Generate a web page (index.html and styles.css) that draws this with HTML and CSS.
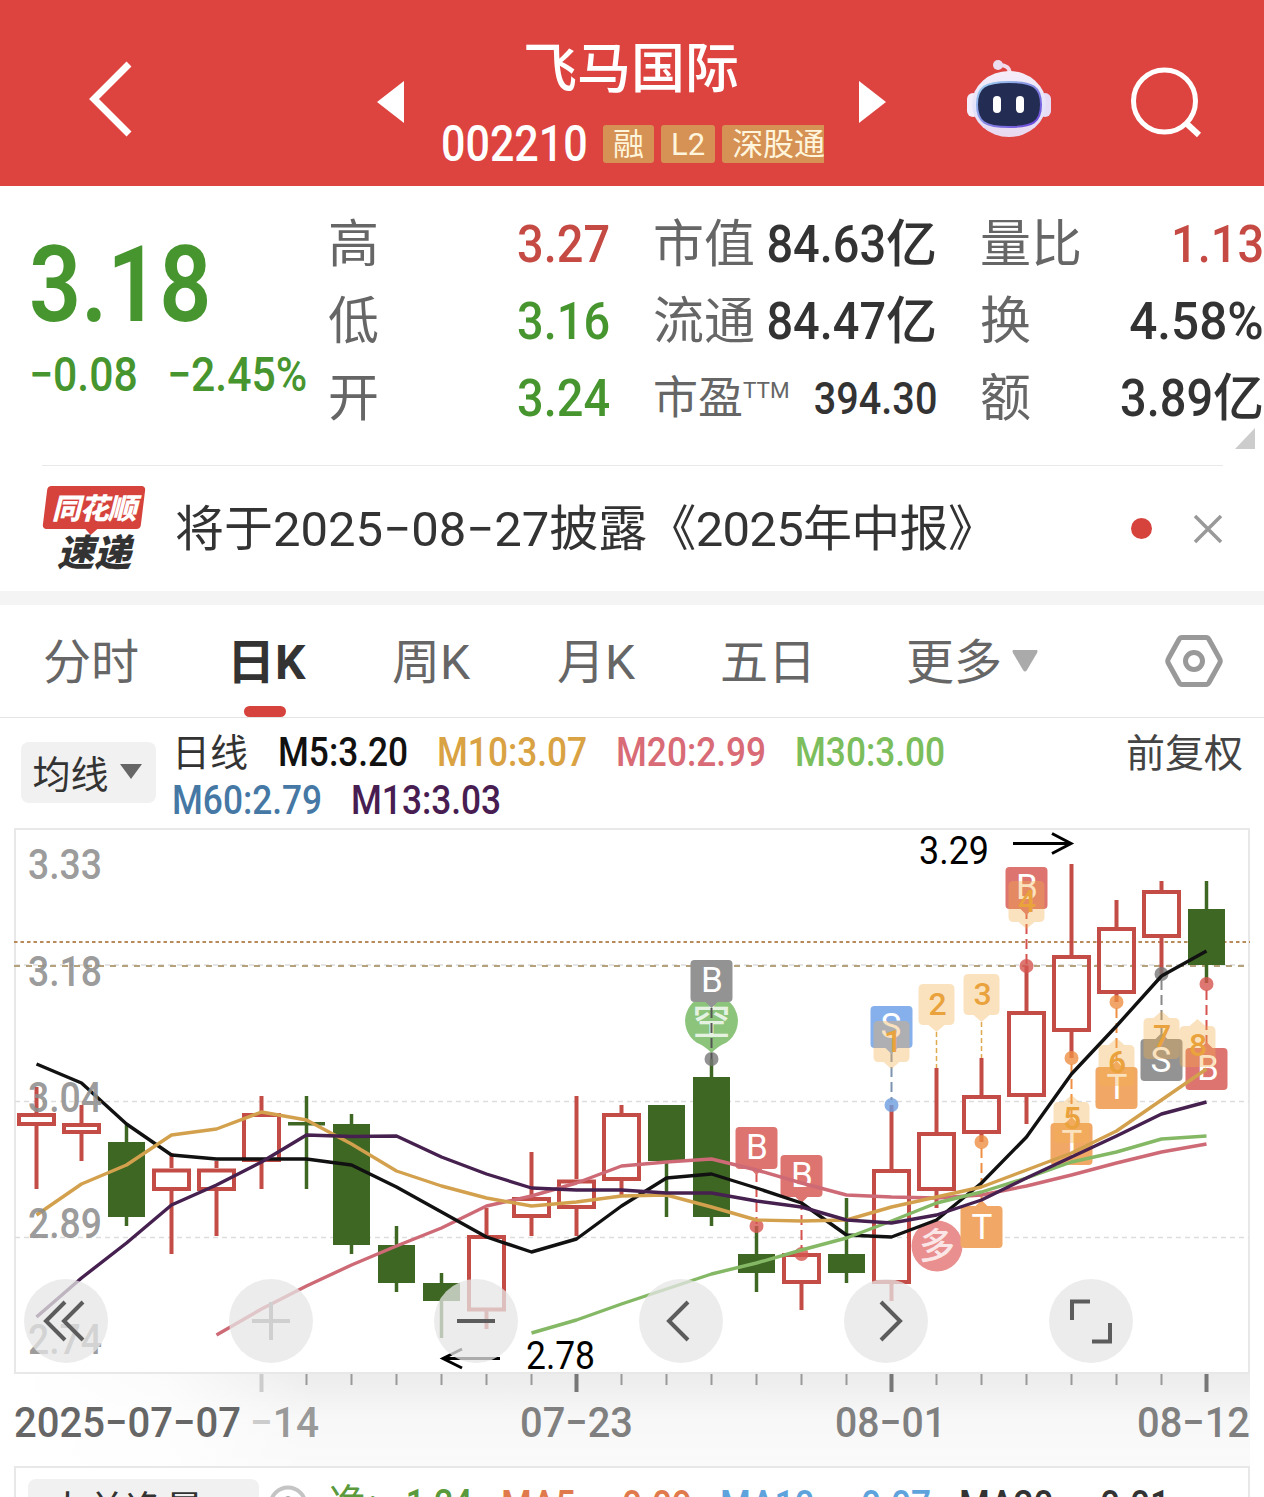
FILE: index.html
```html
<!DOCTYPE html>
<html lang="zh-CN">
<head>
  <meta charset="UTF-8">
  <meta name="viewport" content="width=device-width, initial-scale=1.0">
  <title>飞马国际 002210</title>
  <link rel="stylesheet" href="styles.css">
</head>
<body>
  <!-- 顶部栏 -->
  <header class="header">
    <svg class="back" width="46" height="78" viewBox="0 0 46 78"><path d="M42 4 7 39 42 74" fill="none" stroke="#fff" stroke-width="7"/></svg>
    <svg class="prev" width="27" height="42" viewBox="0 0 27 42"><path d="M27 0v42L0 21z" fill="#fff"/></svg>
    <div class="title">
      <h1>飞马国际</h1>
      <div class="code-row">
        <span class="code"><span class="num">002210</span></span>
        <span class="tag">融</span>
        <span class="tag">L2</span>
        <span class="tag last">深股通</span>
      </div>
    </div>
    <svg class="next" width="27" height="42" viewBox="0 0 27 42"><path d="M0 0v42l27-21z" fill="#fff"/></svg>
    <svg class="robot" width="86" height="80" viewBox="0 0 86 80">
      <defs>
        <linearGradient id="head" x1="0" y1="0" x2="0" y2="1"><stop offset="0" stop-color="#f6edf8"/><stop offset=".6" stop-color="#e3e2fa"/><stop offset="1" stop-color="#ead8ee"/></linearGradient>
        <linearGradient id="ring" x1="0" y1="0" x2="1" y2="1"><stop offset="0" stop-color="#9fd5ef"/><stop offset="1" stop-color="#6a3fd8"/></linearGradient>
      </defs>
      <path d="M32 7q12-1 12 10" fill="none" stroke="#f3dcea" stroke-width="4"/>
      <circle cx="32" cy="7" r="5" fill="#ecdcf0"/>
      <rect x="1" y="35" width="12" height="24" rx="6" fill="#f4ecf8"/>
      <rect x="73" y="35" width="12" height="24" rx="6" fill="#e6dcf6"/>
      <ellipse cx="43" cy="46" rx="37" ry="33" fill="url(#head)"/>
      <path d="M43 24c24 0 32 5 32 22.500S67 69 43 69 11 64 11 46.500 19 24 43 24z" fill="#232c52" stroke="url(#ring)" stroke-width="2"/>
      <rect x="27" y="38" width="8" height="17" rx="4" fill="#fff"/>
      <rect x="50" y="38" width="8" height="17" rx="4" fill="#fff"/>
    </svg>
    <svg class="search" width="72" height="72" viewBox="0 0 72 72"><g fill="none" stroke="#fff" stroke-width="5"><circle cx="34.500" cy="34" r="31"/><path d="M56 56 69 68" stroke-width="6"/></g></svg>
  </header>

  <!-- 行情 -->
  <section class="quote">
    <div class="price">
      <div class="last-price"><span class="num">3.18</span></div>
      <div class="change"><span class="num">−0.08</span><span class="num">−2.45%</span></div>
    </div>
    <dl class="stats col-a">
      <dt>高</dt><dd class="red"><span class="num">3.27</span></dd>
      <dt>低</dt><dd class="green"><span class="num">3.16</span></dd>
      <dt>开</dt><dd class="green"><span class="num">3.24</span></dd>
    </dl>
    <dl class="stats col-b">
      <dt>市值</dt><dd><span class="num">84.63</span>亿</dd>
      <dt>流通</dt><dd><span class="num">84.47</span>亿</dd>
      <dt class="small">市盈<sup>TTM</sup></dt><dd class="small"><span class="num">394.30</span></dd>
    </dl>
    <dl class="stats col-c">
      <dt>量比</dt><dd class="red"><span class="num">1.13</span></dd>
      <dt>换</dt><dd><span class="num wide">4.58%</span></dd>
      <dt>额</dt><dd><span class="num">3.89</span>亿</dd>
    </dl>
    <i class="corner"></i>
  </section>

  <!-- 速递 -->
  <section class="news">
    <div class="logo">
      <div class="logo-top"><span>同花顺</span></div>
      <div class="logo-bottom">速递</div>
    </div>
    <p>将于2025−08−27披露<span class="book">《2025年中报》</span></p>
    <i class="dot"></i>
    <svg width="30" height="30" viewBox="0 0 30 30"><path d="M2 2 28 28M28 2 2 28" stroke="#999" stroke-width="3.500"/></svg>
  </section>

  <!-- 周期 -->
  <nav class="tabs">
    <span>分时</span>
    <span class="active">日K</span>
    <span>周K</span>
    <span>月K</span>
    <span>五日</span>
    <span>更多<svg width="26" height="22" viewBox="0 0 26 22"><path d="M1 0h24q1 1 0 3L15 20q-2 3-4 0L1 3q-1-2 0-3z" fill="#aaa"/></svg></span>
    <svg class="setting" width="58" height="54" viewBox="0 0 58 54"><g fill="none" stroke="#999" stroke-width="5"><path d="M17 3.500h24q2 0 3 2l10.500 19q1.500 2.500 0 5L44 48.500q-1 2-3 2H17q-2 0-3-2L3.500 29.500q-1.500-2.500 0-5L14 5.500q1-2 3-2z"/><circle cx="29" cy="27" r="8.500"/></g></svg>
  </nav>

  <!-- 均线 -->
  <section class="legend">
    <button>均线<svg width="22" height="15" viewBox="0 0 22 15"><path d="M0 0h22L11 15z" fill="#666"/></svg></button>
    <div class="ma">
      <div class="ma-row">
        <b class="day">日线</b>
        <span class="num m5">M5:3.20</span>
        <span class="num m10">M10:3.07</span>
        <span class="num m20">M20:2.99</span>
        <span class="num m30">M30:3.00</span>
      </div>
      <div class="ma-row">
        <span class="num m60">M60:2.79</span>
        <span class="num m13">M13:3.03</span>
      </div>
    </div>
    <span class="adjust">前复权</span>
  </section>

  <!-- K线图 -->
  <section class="chart">
    <svg width="1264" height="638" viewBox="0 828 1264 638">
      <defs>
        <linearGradient id="axis-y" x1="0" y1="0" x2="0" y2="1"><stop offset="0" stop-color="#ececec"/><stop offset=".5" stop-color="#f8f8f8"/><stop offset="1" stop-color="#fafafa"/></linearGradient>
        <linearGradient id="axis-x"><stop offset="0" stop-color="#fff"/><stop offset=".5" stop-color="#fff" stop-opacity=".8"/><stop offset="1" stop-color="#fff" stop-opacity="0"/></linearGradient>
        <path id="box-down" d="M-17-21h34q4 0 4 4v34q0 4-4 4H6l-6 6-6-6h-11q-4 0-4-4v-34q0-4 4-4z"/>
        <path id="box-up" d="M-17-21h11l6-6 6 6h11q4 0 4 4v34q0 4-4 4h-34q-4 0-4-4v-34q0-4 4-4z"/>
        <path id="bubble" d="M-13-21h26q5 0 5 5v31q0 5-5 5H8l-8 7-8-7h-5q-5 0-5-5v-31q0-5 5-5z"/>
        <path id="bubble-up" d="M-13-20h5l8-7 8 7h5q5 0 5 5v31q0 5-5 5h-26q-5 0-5-5v-31q0-5 5-5z"/>
      </defs>

      <rect x="14" y="1374" width="1236" height="94" fill="url(#axis-y)"/>
      <rect x="14" y="1374" width="300" height="94" fill="url(#axis-x)"/>
      <path d="M15 1373V829H1249V1373z" fill="#fff" stroke="#e8e8e8" stroke-width="2"/>
      <g stroke="#ddd" stroke-width="1.500" stroke-dasharray="5 4">
        <path d="M15 965H1249M15 1101.500H1249M15 1237.500H1249"/>
      </g>
      <path d="M14 942H1250" stroke="#b98a5a" stroke-width="2" stroke-dasharray="3.500 3"/>
      <path d="M14 966H1250" stroke="#b5a27c" stroke-width="2" stroke-dasharray="6 6"/>

      <!-- 阳线 -->
      <g class="up">
        <path d="M36.500 1087v27m0 11v64M81.500 1105v18m0 11v27M171.500 1153v15m0 23v63M216.500 1161v7m0 23v45M261.500 1096v17m0 48v28M486.500 1208v27m0 76v18M531.500 1152v44m0 22v18M576.500 1096v83m0 30v27M621.500 1105v8m0 68v14M801.500 1284v26M891.500 1105v64m0 115v17M936.500 1068v64m0 59v17M981.500 1058v37m0 39v8M1026.500 966v45m0 86v27M1071.500 864v91m0 77v26M1116.500 900v27m0 67v8M1161.500 881v9m0 48v36"/>
        <path d="M19 1115h35v9H19zM64 1125h35v7H64zM154 1170.500h35v18.500h-35zM199 1170.500h35v18.500h-35zM244 1115h35v45h-35zM469 1237h35v72.500h-35zM514 1199h35v17h-35zM559 1181.500h35v25.500h-35zM604 1115h35v64h-35zM784 1255h35v27h-35zM874 1171h35v111h-35zM919 1134h35v55h-35zM964 1097h35v35h-35zM1009 1013h35v82h-35zM1054 957h35v73h-35zM1099 929h35v63h-35zM1144 892h35v44h-35z"/>
      </g>
      <!-- 阴线 -->
      <g class="down">
        <path class="wick" d="M126.500 1123v103M306.500 1096v93M351.500 1114v140M396.500 1226v66M441.500 1273v65M666.500 1105v112M711.500 1059v167M756.500 1226v66M846.500 1198v85M1206.500 881v102"/>
        <path d="M108 1142h37v75h-37zM288 1122h37v3.500h-37zM333 1124h37v121h-37zM378 1245h37v38h-37zM423 1283h37v18h-37zM648 1105h37v56h-37zM693 1077h37v140h-37zM738 1254h37v19h-37zM828 1254h37v19h-37zM1188 909h37v56h-37z"/>
      </g>

      <!-- 买卖点 -->
      <g fill-opacity=".8">
        <circle cx="711.500" cy="1059" r="7" fill="#777"/>
        <g fill="#d6544f"><circle cx="756.500" cy="1226" r="7"/><circle cx="801.500" cy="1254" r="7"/><circle cx="1026.500" cy="966" r="7"/><circle cx="1206.500" cy="984" r="7"/></g>
        <circle cx="891.500" cy="1105" r="7" fill="#6b9de0"/>
        <g fill="#ee8f43"><circle cx="981.500" cy="1142" r="7"/><circle cx="1071.500" cy="1058" r="7"/><circle cx="1116.500" cy="1002" r="7"/></g>
        <circle cx="1161.500" cy="974" r="7" fill="#777"/>
      </g>
      <g fill="#66b050" fill-opacity=".75"><path d="M711.500 995a26 26 0 0 1 15 47.500q-9 4-15 10.500-6-6.500-15-10.500A26 26 0 0 1 711.500 995z"/></g>
      <text class="badge-cn" x="711.500" y="1034" font-size="38">空</text>
      <circle cx="937" cy="1246" r="25.500" fill="#e98f8f"/>
      <text class="badge-cn" x="937" y="1259" font-size="36">多</text>

      <g stroke-width="2" stroke-dasharray="10 5">
        <path d="M711.500 1008v51" stroke="#555"/>
        <path d="M756.500 1172v52M801.500 1200v52M1026.500 909v55M1206.500 990v56" stroke="#d6544f"/>
        <path d="M891.500 1052v48" stroke="#7d93b0"/>
        <path d="M1161.500 980v54" stroke="#888"/>
        <path d="M981.500 1148v52M1071.500 1064v54M1116.500 1008v52" stroke="#ee8f43"/>
      </g>
      <g stroke="#e0a94f" stroke-width="1.500" stroke-dasharray="5 3"><path d="M936.500 1032v36M981.500 1022v36"/></g>

      <g fill="#939393"><use href="#box-down" x="711.500" y="981"/><use href="#box-up" x="1161.500" y="1060"/></g>
      <g fill="#dd7470"><use href="#box-down" x="756.500" y="1148"/><use href="#box-down" x="801.500" y="1176"/><use href="#box-down" x="1026.500" y="888"/><use href="#box-up" x="1206.500" y="1069"/></g>
      <use href="#box-down" x="891.500" y="1027" fill="#86b0ec"/>
      <g fill="#f1a866"><use href="#box-up" x="981.500" y="1227"/><use href="#box-up" x="1071.500" y="1144"/><use href="#box-up" x="1116.500" y="1088"/></g>
      <g class="badge">
        <text x="712" y="992">B</text><text x="757" y="1159">B</text><text x="802" y="1187">B</text><text x="1027" y="899">B</text>
        <text x="891" y="1038">S</text><text x="982" y="1239">T</text><text x="1072" y="1155">T</text><text x="1117" y="1099">T</text>
        <text x="1161" y="1072">S</text><text x="1208" y="1080">B</text>
      </g>
      <g fill="#f5b04e" fill-opacity=".36">
        <use href="#bubble" x="891.500" y="1042"/><use href="#bubble" x="936.500" y="1005"/><use href="#bubble" x="981.500" y="995"/><use href="#bubble" x="1026.500" y="902"/>
        <use href="#bubble-up" x="1071.500" y="1122"/><use href="#bubble-up" x="1116.500" y="1065"/><use href="#bubble-up" x="1161.500" y="1038"/><use href="#bubble-up" x="1197.500" y="1046"/>
      </g>
      <g class="step">
        <text x="893" y="1052">1</text><text x="937.500" y="1015">2</text><text x="982.500" y="1005">3</text><text x="1027" y="912">4</text>
        <text x="1072" y="1129">5</text><text x="1117" y="1073">6</text><text x="1162" y="1047">7</text><text x="1198" y="1056">8</text>
      </g>

      <!-- 均线 -->
      <g class="lines">
        <polyline stroke="#cd6a76" points="216.500,1335 261.500,1309 306.500,1286 351.500,1265 396.500,1246 441.500,1228 486.500,1206 531.500,1196 576.500,1183 621.500,1166 666.500,1162 711.500,1159 756.500,1170 801.500,1183 846.500,1195 891.500,1197 936.500,1198 981.500,1195 1026.500,1186 1071.500,1175 1116.500,1163 1161.500,1152 1206.500,1144"/>
        <polyline stroke="#111" points="36.500,1064 81.500,1083 126.500,1124 171.500,1155 216.500,1159 306.500,1159 351.500,1165 396.500,1187 441.500,1212 486.500,1237 531.500,1252 576.500,1239 621.500,1206 666.500,1178 711.500,1174 756.500,1188 801.500,1203 846.500,1235 891.500,1237 936.500,1220 981.500,1183 1026.500,1137 1071.500,1074 1116.500,1026 1161.500,976 1206.500,951"/>
        <polyline stroke="#d3a14d" points="36.500,1215 81.500,1184 126.500,1165 171.500,1135 216.500,1129 261.500,1112 306.500,1120 351.500,1144 396.500,1171 441.500,1186 486.500,1198 531.500,1206 576.500,1202 621.500,1196 666.500,1195 711.500,1207 756.500,1220 801.500,1221 846.500,1220 891.500,1207 936.500,1197 981.500,1187 1026.500,1170 1071.500,1153 1116.500,1131 1161.500,1100 1206.500,1069"/>
        <polyline stroke="#84b865" points="531.500,1333 576.500,1320 621.500,1304 666.500,1289 711.500,1274 756.500,1263 801.500,1250 846.500,1238 891.500,1221 936.500,1203 981.500,1192 1026.500,1178 1071.500,1162 1116.500,1152 1161.500,1139 1206.500,1136"/>
        <polyline stroke="#46204f" points="36.500,1317 81.500,1278 126.500,1243 171.500,1205 216.500,1185 261.500,1162 306.500,1135 351.500,1136.500 396.500,1136 441.500,1157 486.500,1174 531.500,1188 576.500,1190 621.500,1190 666.500,1193 711.500,1193 756.500,1201 801.500,1207 846.500,1220 891.500,1223 936.500,1215 981.500,1200 1026.500,1178 1071.500,1157 1116.500,1136 1161.500,1114 1206.500,1102"/>
      </g>

      <g class="scale">
        <text x="28" y="879" textLength="74" lengthAdjust="spacingAndGlyphs">3.33</text>
        <text x="28" y="986" textLength="74" lengthAdjust="spacingAndGlyphs">3.18</text>
        <text x="28" y="1112" textLength="74" lengthAdjust="spacingAndGlyphs">3.04</text>
        <text x="28" y="1238" textLength="74" lengthAdjust="spacingAndGlyphs">2.89</text>
        <text x="28" y="1354" textLength="74" lengthAdjust="spacingAndGlyphs">2.74</text>
      </g>
      <g class="peak">
        <text x="919" y="864" textLength="70" lengthAdjust="spacingAndGlyphs">3.29</text>
        <text x="526" y="1369" textLength="69" lengthAdjust="spacingAndGlyphs">2.78</text>
        <path d="M1013 843.500h57M1052 833.500l19 10-19 10M500 1358.500h-57M462 1349l-19 9.500 19 9.500"/>
      </g>

      <!-- 时间轴 -->
      <path class="tick" d="M306.500 1374v11m45-11v11m45-11v11m45-11v11m45-11v11m45-11v11m90-11v11m45-11v11m45-11v11m45-11v11m45-11v11m45-11v11m90-11v11m45-11v11m45-11v11m45-11v11m45-11v11m45-11v11"/>
      <path class="tick-main" d="M576.500 1374v18M891.500 1374v18M1206.500 1374v18"/>
      <path d="M261.500 1374v18" stroke="#ccc" stroke-width="4"/>
      <g class="dates">
        <text x="14" y="1437" textLength="227" lengthAdjust="spacingAndGlyphs" fill="#666">2025−07−07</text>
        <text x="250" y="1437" textLength="69" lengthAdjust="spacingAndGlyphs"><tspan fill="#ccc">−</tspan><tspan fill="#999">14</tspan></text>
        <text x="520" y="1437" textLength="113" lengthAdjust="spacingAndGlyphs">07−23</text>
        <text x="835" y="1437" textLength="111" lengthAdjust="spacingAndGlyphs">08−01</text>
        <text x="1137" y="1437" textLength="113" lengthAdjust="spacingAndGlyphs">08−12</text>
      </g>
    </svg>

    <!-- 悬浮按钮 -->
    <div class="tools">
      <button><svg viewBox="0 0 84 84"><path d="M41 23 22 42l19 19M59 23 40 42l19 19"/></svg></button>
      <button class="off"><svg viewBox="0 0 84 84"><path d="M23 42h38M42 23v38"/></svg></button>
      <button><svg viewBox="0 0 84 84"><path d="M23 42h38"/></svg></button>
      <button><svg viewBox="0 0 84 84"><path d="M49 23 30 42l19 19"/></svg></button>
      <button><svg viewBox="0 0 84 84"><path d="M37 23 56 42 37 61"/></svg></button>
      <button><svg viewBox="0 0 84 84"><path d="M41 22.500H23V41M61 44v18.500H43"/></svg></button>
    </div>
  </section>

  <!-- 副图 -->
  <section class="sub">
    <button>大单净量</button>
    <svg width="40" height="40" viewBox="0 0 40 40"><circle cx="20" cy="20" r="17.500" fill="none" stroke="#c4c4c4" stroke-width="4"/><circle cx="20" cy="14" r="3" fill="#aaa"/></svg>
    <span class="net">净: <span class="num">−1.24</span></span>
    <span class="num s5">MA5: −0.09</span>
    <span class="num s10">MA10: −0.07</span>
    <span class="num s20">MA20: −0.01</span>
  </section>
</body>
</html>
```
FILE: styles.css
```css
* {
    box-sizing: border-box;
    margin: 0;
    padding: 0;
}
body {
    width: 1264px;
    height: 1497px;
    overflow: hidden;
    background: #fff;
    color: #333;
    font-family: Roboto, "Noto Sans CJK SC", sans-serif;
}
button {
    border: none;
    font-family: inherit;
}
svg {
    display: block;
    flex-shrink: 0;
}
/* 窄体数字 */
.num {
    display: inline-block;
    font-weight: 500;
    transform: scaleX(0.86);
    transform-origin: left;
    white-space: nowrap;
}
.red { color: #c54a43; }
.green { color: #46952f; }

/* 顶部栏 */
.header {
    display: flex;
    height: 186px;
    background: #dd4440;
    color: #fff;
}
.back { margin: 60px 0 0 87px; }
.prev { margin: 81px 0 0 244px; }
.title {
    width: 383px;
    margin: 0 35px 0 37px;
    overflow: hidden;
}
.title h1 {
    margin-top: 39px;
    padding-right: 3px;
    height: 62px;
    line-height: 62px;
    text-align: center;
    font-size: 54px;
    font-weight: 500;
}
.code-row {
    display: flex;
    align-items: center;
    height: 50px;
    margin-top: 18px;
    gap: 7px;
}
.code {
    width: 155px;
    font-size: 50px;
    line-height: 57px;
}
.tag {
    flex-shrink: 0;
    height: 38px;
    padding: 0 10px;
    border-radius: 3px;
    background: #d69255;
    color: #fff5dc;
    font-size: 31px;
    line-height: 39px;
    white-space: nowrap;
}
.next { margin-top: 81px; }
.robot { margin: 58px 0 0 80px; }
.search { margin: 67px 0 0 78px; }

/* 行情 */
.quote {
    position: relative;
    display: flex;
    height: 279px;
    padding-top: 20px;
}
.price {
    width: 328px;
    padding-left: 29px;
    color: #46952f;
}
.last-price {
    height: 130px;
    font-size: 105px;
    line-height: 159px;
}
.last-price .num {
    font-weight: 600;
    transform: scaleX(0.87);
}
.change {
    display: flex;
    gap: 16px;
    margin-top: 12px;
    font-size: 48px;
    line-height: 54px;
}
.change .num { transform: scaleX(0.89); }
.stats {
    display: grid;
    grid-template-columns: auto auto;
    grid-template-rows: repeat(3, 77px);
    justify-content: space-between;
    align-items: center;
    font-size: 51px;
    line-height: 79px;
    white-space: nowrap;
}
.stats dt { color: #666; }
.stats dd {
    text-align: right;
    font-weight: 500;
}
.stats .num {
    transform: scaleX(0.92);
    transform-origin: right;
}
.stats .wide { transform: scaleX(0.97); }
.col-a { width: 282px; }
.col-b {
    width: 284px;
    margin-left: 43px;
    grid-template-columns: 100px 1fr;
}
.col-c {
    width: 284px;
    margin-left: 43px;
}
.stats .small { font-size: 45px; }
.stats .small .num { transform: scaleX(0.88); }
.stats sup {
    font-size: 22.5px;
    line-height: 1;
    vertical-align: 16px;
    font-weight: 400;
}
.corner {
    position: absolute;
    right: 9px;
    bottom: 16px;
    border-left: 20px solid transparent;
    border-bottom: 21px solid #ccc;
}

/* 速递 */
.news {
    display: flex;
    align-items: center;
    height: 126px;
    margin: 0 41px 0 42px;
    border-top: 1px solid #e9e9e9;
}
.logo {
    width: 104px;
    height: 86px;
    font-style: italic;
    font-weight: 900;
}
.logo-top {
    position: relative;
    height: 43px;
    margin: 0 3px;
    border-radius: 4px;
    background: #d5433c;
    color: #fff;
    font-size: 29px;
    line-height: 46px;
    text-align: center;
    letter-spacing: -1px;
    transform: skewX(-7deg);
}
.logo-top::after {
    content: "";
    position: absolute;
    left: 42px;
    top: 42px;
    border: 7px solid transparent;
    border-top-color: #d5433c;
    border-bottom: none;
}
.logo-top span {
    display: block;
    transform: skewX(7deg);
}
.logo-bottom {
    font-size: 37px;
    line-height: 50px;
    text-align: center;
}
.news p {
    flex: 1;
    margin: -8px 0 0 29px;
    font-size: 49px;
    white-space: nowrap;
}
.book { letter-spacing: -0.7px; }
.dot {
    width: 21px;
    height: 21px;
    margin-right: 41px;
    border-radius: 50%;
    background: #d5433c;
}

/* 周期 */
.tabs {
    display: grid;
    grid-template-columns: 186px 163px 165px 163px 186px 1fr 58px;
    align-items: center;
    height: 127px;
    padding: 0 41px 0 43px;
    border-top: 14px solid #f4f4f4;
    border-bottom: 1px solid #e4e4e4;
    color: #666;
    font-size: 48px;
    line-height: 112px;
}
.tabs span {
    display: flex;
    align-items: center;
    gap: 10px;
    height: 112px;
    padding-top: 3px;
}
.tabs span svg { margin-top: -3px; }
.tabs .active {
    position: relative;
    left: -2px;
    color: #333;
    font-weight: 700;
}
.active::after {
    content: "";
    position: absolute;
    left: 17px;
    bottom: 0;
    width: 42px;
    height: 11px;
    border-radius: 6px;
    background: #d5433c;
}

/* 均线 */
.legend {
    display: flex;
    height: 110px;
    padding: 9px 21px 0;
}
.legend button {
    display: flex;
    align-items: center;
    justify-content: center;
    gap: 11px;
    width: 135px;
    height: 61px;
    margin-top: 15px;
    padding: 0 3px 2px 0;
    border-radius: 8px;
    background: #f1f1f1;
    color: #333;
    font-size: 38px;
}
.ma {
    flex: 1;
    margin-left: 16px;
}
.ma-row {
    display: flex;
    height: 48px;
    font-size: 41px;
    line-height: 50px;
}
.day {
    width: 106px;
    font-size: 38px;
    font-weight: 400;
    line-height: 52px;
}
.ma-row .num { width: 179px; }
.ma-row .m5 { width: 159px; color: #111; }
.m10 { color: #d9a243; }
.m20 { color: #d86b76; }
.m30 { color: #7cbd5c; }
.m60 { color: #4678a5; }
.m13 { color: #471d52; }
.adjust {
    font-size: 39px;
    line-height: 55px;
    color: #444;
}

/* K线图 */
.chart {
    position: relative;
    height: 638px;
}
.up {
    fill: none;
    stroke: #c34c46;
    stroke-width: 4;
}
.down { fill: #3e6723; }
.wick {
    stroke: #3e6723;
    stroke-width: 3.5;
}
.lines {
    fill: none;
    stroke-width: 3.4;
    stroke-linejoin: round;
}
.badge {
    fill: #fff;
    font-size: 35px;
    text-anchor: middle;
}
.badge-cn {
    fill: #fff;
    fill-opacity: 0.8;
    font-weight: 500;
    text-anchor: middle;
}
.step {
    fill: #e9a23c;
    font-size: 32px;
    font-weight: 500;
    text-anchor: middle;
}
.scale {
    fill: #8e8e8e;
    fill-opacity: 0.9;
    font-size: 42px;
    font-weight: 500;
}
.peak {
    font-size: 38px;
    fill: #000;
}
.peak path {
    fill: none;
    stroke: #000;
    stroke-width: 3;
}
.tick {
    fill: none;
    stroke: #999;
    stroke-width: 2;
}
.tick-main {
    stroke: #777;
    stroke-width: 4;
}
.dates {
    fill: #808080;
    font-size: 42px;
    font-weight: 500;
}
.tools {
    position: absolute;
    left: 24px;
    top: 451px;
    display: flex;
    gap: 121px;
}
.tools button {
    width: 84px;
    height: 84px;
    border-radius: 50%;
    background: rgba(230, 230, 230, 0.75);
}
.tools path {
    fill: none;
    stroke: #5c5c5c;
    stroke-width: 4;
}
.tools .off path { stroke: #cfcfcf; }

/* 副图 */
.sub {
    display: flex;
    height: 90px;
    margin: 0 14px;
    padding: 11px 0 0 12px;
    border: 2px solid #e8e8e8;
    background: #fff;
    font-size: 41px;
    line-height: 52px;
    white-space: nowrap;
}
.sub button {
    width: 231px;
    height: 60px;
    padding: 0 0 14px 20px;
    border-radius: 8px;
    background: #f1f1f1;
    color: #333;
    font-size: 39px;
    text-align: left;
}
.sub svg { margin: 6px 0 0 9px; }
.sub .num { word-spacing: 10px; }
.net {
    width: 172px;
    margin-left: 21px;
    color: #5a9a3c;
    font-size: 39px;
    line-height: 50px;
}
.sub .s5 { width: 219px; color: #e07a4c; }
.sub .s10 { width: 239px; color: #5fa3dd; }
.sub .s20 { color: #333; }
```
